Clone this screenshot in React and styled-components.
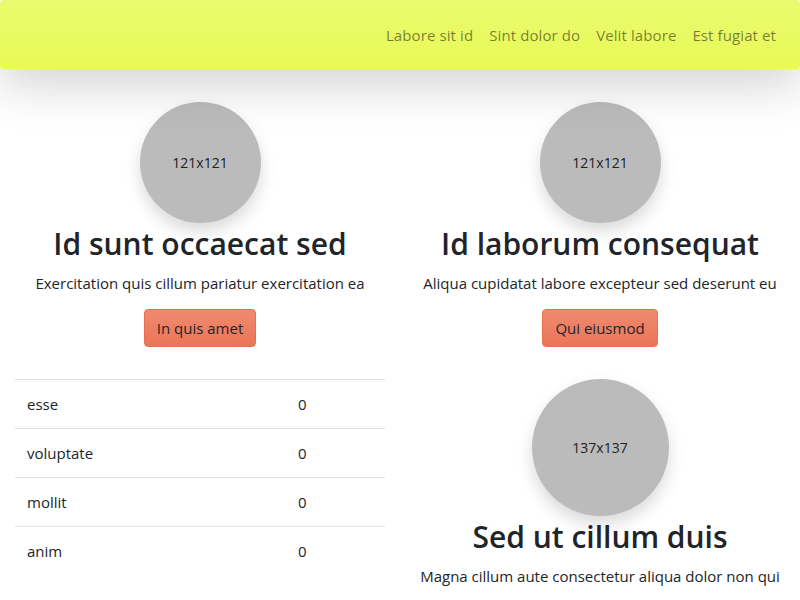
import React from "react";
import styled, { createGlobalStyle } from "styled-components";

const Global = createGlobalStyle`
  html, body { margin: 0; padding: 0; background: #fff; }
  body {
    font-family: "Segoe UI", "Open Sans", "Noto Sans", sans-serif;
    font-size: 15px;
    line-height: 24px;
    color: #212529;
  }
  * { box-sizing: border-box; }
`;

const Navbar = styled.nav`
  height: 69px;
  display: flex;
  align-items: center;
  justify-content: flex-end;
  padding: 0 16px;
  background: linear-gradient(180deg, #ebfa6f 0%, #e8fa55 100%);
  border-radius: 4px;
  box-shadow: 0 16px 48px rgba(0, 0, 0, 0.175);
  position: relative;
  z-index: 1;
`;

const NavLink = styled.a`
  padding: 8px 8px;
  color: rgba(0, 0, 0, 0.5);
  text-decoration: none;
  font-size: 15px;
  line-height: 24px;
  letter-spacing: 0.1px;
`;

const Main = styled.main`
  display: grid;
  grid-template-columns: minmax(0, 1fr) minmax(0, 1fr);
  padding-top: 33px;
`;

const Column = styled.div`
  padding: 0 15px;
  display: flex;
  flex-direction: column;
  min-width: 0;
`;

const Card = styled.section`
  display: flex;
  flex-direction: column;
  align-items: center;
  text-align: center;
  margin-bottom: 32px;
`;

const Avatar = styled.div`
  width: ${(p) => p.size}px;
  height: ${(p) => p.size}px;
  flex-shrink: 0;
  border-radius: 50%;
  background: #bbbbbb;
  box-shadow: 0 8px 16px rgba(0, 0, 0, 0.15);
  display: flex;
  align-items: center;
  justify-content: center;
  font-size: 14px;
  color: #222;
  margin-bottom: 2px;
`;

const Title = styled.h2`
  margin: 0 0 8px;
  font-size: 30px;
  line-height: 38px;
  font-weight: 600;
  white-space: nowrap;
`;

const Lead = styled.p`
  margin: 0 0 14px;
  white-space: nowrap;
`;

const Button = styled.button`
  font-family: inherit;
  font-size: 15px;
  line-height: 24px;
  padding: 6px 12px;
  color: #212529;
  background: linear-gradient(180deg, #ef8b70 0%, #ec7457 100%);
  border: 1px solid #e8704f;
  border-radius: 4px;
`;

const Table = styled.div`
  display: grid;
  grid-template-columns: 271px 1fr;
`;

const Cell = styled.div`
  padding: 12px;
  border-top: 1px solid #dee2e6;
`;

const rows = ["esse", "voluptate", "mollit", "anim"];

export default function App() {
  return (
    <>
      <Global />
      <Navbar>
        <NavLink href="#">Labore sit id</NavLink>
        <NavLink href="#">Sint dolor do</NavLink>
        <NavLink href="#">Velit labore</NavLink>
        <NavLink href="#">Est fugiat et</NavLink>
      </Navbar>
      <Main>
        <Column>
          <Card>
            <Avatar size={121}>121x121</Avatar>
            <Title>Id sunt occaecat sed</Title>
            <Lead>Exercitation quis cillum pariatur exercitation ea</Lead>
            <Button>In quis amet</Button>
          </Card>
          <Table>
            {rows.map((r) => (
              <React.Fragment key={r}>
                <Cell>{r}</Cell>
                <Cell>0</Cell>
              </React.Fragment>
            ))}
          </Table>
        </Column>
        <Column>
          <Card>
            <Avatar size={121}>121x121</Avatar>
            <Title>Id laborum consequat</Title>
            <Lead>Aliqua cupidatat labore excepteur sed deserunt eu</Lead>
            <Button>Qui eiusmod</Button>
          </Card>
          <Card>
            <Avatar size={137}>137x137</Avatar>
            <Title>Sed ut cillum duis</Title>
            <Lead>Magna cillum aute consectetur aliqua dolor non qui</Lead>
          </Card>
        </Column>
      </Main>
    </>
  );
}
